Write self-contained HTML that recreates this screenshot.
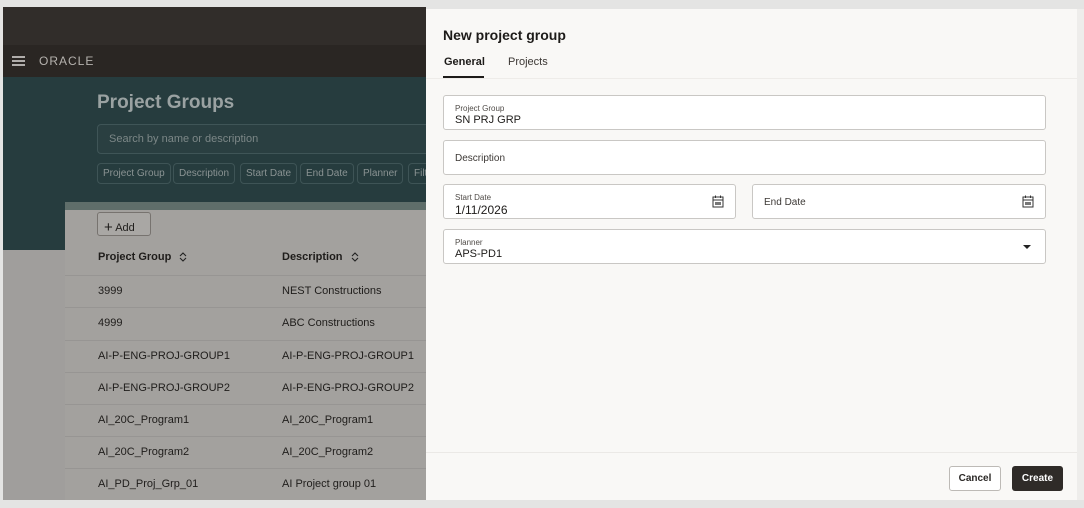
<!DOCTYPE html>
<html><head><style>
*{box-sizing:border-box;margin:0;padding:0}
body{width:1084px;height:508px;background:#e4e4e3;font-family:"Liberation Sans",sans-serif;position:relative;overflow:hidden}
.a{position:absolute}
.lp{left:3px;top:7px;width:423px;height:493px;background:#a09e9c;overflow:hidden}
.row{position:absolute;left:62px;width:361px;border-top:1px solid #979593;height:32px}
.row span{position:absolute;top:9px;font-size:11px;color:#1f1d1b}
.chip{position:absolute;top:156px;height:21px;border:1px solid #3e5456;border-radius:4px;color:#8a9393;font-size:10px;padding:4px 5px;white-space:nowrap}
.panel{left:426px;top:9px;width:651px;height:491px;background:#f9f8f6}
.f{position:absolute;background:#fff;border:1px solid #c9c7c4;border-radius:3px}
.lbl{position:absolute;left:11px;top:8px;font-size:8px;color:#504c48}
.val{position:absolute;left:11px;top:18px;font-size:11px;color:#1e1c1a}
.srt{display:inline-block;vertical-align:middle;margin-left:8px}
</style></head><body>
<div class="a lp">
 <div class="a" style="left:0;top:0;width:423px;height:38px;background:#312d2a"></div>
 <div class="a" style="left:0;top:38px;width:423px;height:32px;background:#2a2623"></div>
 <div class="a" style="left:9px;top:49px;width:13px;height:2px;background:#b0adab;box-shadow:0 4px 0 #b0adab,0 8px 0 #b0adab"></div>
 <div class="a" style="left:36px;top:47px;font-size:12px;color:#b5b2ae;letter-spacing:1px">ORACLE</div>
 <div class="a" style="left:0;top:70px;width:423px;height:173px;background:#263c3e"></div>
 <div class="a" style="left:94px;top:85px;font-size:19px;font-weight:bold;color:#9aa2a2">Project Groups</div>
 <div class="a" style="left:94px;top:117px;width:340px;height:30px;border:1px solid #3f5557;border-radius:4px;background:#2a3f41"><span style="position:absolute;left:11px;top:8px;font-size:11px;color:#7c8787">Search by name or description</span></div>
 <div class="chip" style="left:94px">Project Group</div>
 <div class="chip" style="left:170px">Description</div>
 <div class="chip" style="left:237px">Start Date</div>
 <div class="chip" style="left:297px">End Date</div>
 <div class="chip" style="left:354px">Planner</div>
 <div class="chip" style="left:405px">Filt</div>
 <div class="a" style="left:62px;top:195px;width:361px;height:8px;background:#5f6e6a"></div>
 <div class="a" style="left:62px;top:203px;width:361px;height:300px;background:#a3a19e"></div>
 <div class="a" style="left:94px;top:205px;width:54px;height:24px;border:1px solid #77736f;border-radius:3px;background:#a9a7a4;font-size:11px;padding:5px 0 0 6px;color:#1f1d1b"><b style="font-size:15px;font-weight:normal;position:relative;top:1px">+</b> Add</div>
 <div class="row" style="top:235px;border:none"><span style="left:33px;font-weight:bold">Project Group<svg class="srt" width="8" height="10" viewBox="0 0 8 10"><path d="M1 4L4 1L7 4M1 6L4 9L7 6" fill="none" stroke="#222" stroke-width="1.1"/></svg></span><span style="left:217px;font-weight:bold">Description<svg class="srt" width="8" height="10" viewBox="0 0 8 10"><path d="M1 4L4 1L7 4M1 6L4 9L7 6" fill="none" stroke="#222" stroke-width="1.1"/></svg></span></div>
 <div class="row" style="top:268px"><span style="left:33px">3999</span><span style="left:217px">NEST Constructions</span></div>
 <div class="row" style="top:300px"><span style="left:33px">4999</span><span style="left:217px">ABC Constructions</span></div>
 <div class="row" style="top:333px"><span style="left:33px">AI-P-ENG-PROJ-GROUP1</span><span style="left:217px">AI-P-ENG-PROJ-GROUP1</span></div>
 <div class="row" style="top:365px"><span style="left:33px">AI-P-ENG-PROJ-GROUP2</span><span style="left:217px">AI-P-ENG-PROJ-GROUP2</span></div>
 <div class="row" style="top:397px"><span style="left:33px">AI_20C_Program1</span><span style="left:217px">AI_20C_Program1</span></div>
 <div class="row" style="top:429px"><span style="left:33px">AI_20C_Program2</span><span style="left:217px">AI_20C_Program2</span></div>
 <div class="row" style="top:461px"><span style="left:33px">AI_PD_Proj_Grp_01</span><span style="left:217px">AI Project group 01</span></div>
</div>
<div class="a" style="left:1077px;top:9px;width:7px;height:491px;background:#eeedeb"></div>
<div class="a panel">
 <div class="a" style="left:17px;top:18px;font-size:14px;font-weight:bold;color:#1d1b19">New project group</div>
 <div class="a" style="left:18px;top:47px;font-size:11px;font-weight:bold;color:#1d1b19">General</div>
 <div class="a" style="left:82px;top:47px;font-size:11px;color:#3c3835">Projects</div>
 <div class="a" style="left:17px;top:67px;width:41px;height:2px;background:#1d1b19"></div>
 <div class="a" style="left:0;top:69px;width:651px;height:1px;background:#eeece9"></div>
 <div class="f" style="left:17px;top:86px;width:603px;height:35px"><div class="lbl">Project Group</div><div class="val">SN PRJ GRP</div></div>
 <div class="f" style="left:17px;top:131px;width:603px;height:35px"><div class="val" style="top:12px;font-size:10px;color:#3c3835">Description</div></div>
 <div class="f" style="left:17px;top:175px;width:293px;height:35px"><div class="lbl">Start Date</div><div class="val" style="font-size:12px">1/11/2026</div>
  <svg class="a" style="right:11px;top:10px" width="12" height="13" viewBox="0 0 12 13"><rect x="1" y="2" width="10" height="10" fill="none" stroke="#333" stroke-width="1"/><line x1="1" y1="5" x2="11" y2="5" stroke="#333"/><line x1="3.5" y1="0.5" x2="3.5" y2="3" stroke="#333"/><line x1="8.5" y1="0.5" x2="8.5" y2="3" stroke="#333"/><rect x="3" y="7" width="6" height="3" fill="#777"/></svg></div>
 <div class="f" style="left:326px;top:175px;width:294px;height:35px"><div class="val" style="top:12px;font-size:10px;color:#3c3835">End Date</div>
  <svg class="a" style="right:11px;top:10px" width="12" height="13" viewBox="0 0 12 13"><rect x="1" y="2" width="10" height="10" fill="none" stroke="#333" stroke-width="1"/><line x1="1" y1="5" x2="11" y2="5" stroke="#333"/><line x1="3.5" y1="0.5" x2="3.5" y2="3" stroke="#333"/><line x1="8.5" y1="0.5" x2="8.5" y2="3" stroke="#333"/><rect x="3" y="7" width="6" height="3" fill="#777"/></svg></div>
 <div class="f" style="left:17px;top:220px;width:603px;height:35px"><div class="lbl">Planner</div><div class="val">APS-PD1</div>
  <div class="a" style="right:14px;top:15px;width:0;height:0;border-left:4px solid transparent;border-right:4px solid transparent;border-top:4px solid #222"></div></div>
 <div class="a" style="left:0;top:443px;width:651px;height:1px;background:#ebe9e6"></div>
 <div class="a" style="left:523px;top:457px;width:52px;height:25px;border:1px solid #bdbab6;border-radius:3px;background:#fff;font-size:10px;font-weight:bold;color:#2a2725;text-align:center;line-height:23px">Cancel</div>
 <div class="a" style="left:586px;top:457px;width:51px;height:25px;border-radius:3px;background:#2f2b28;font-size:10px;font-weight:bold;color:#fff;text-align:center;line-height:25px">Create</div>
</div>
</body></html>
